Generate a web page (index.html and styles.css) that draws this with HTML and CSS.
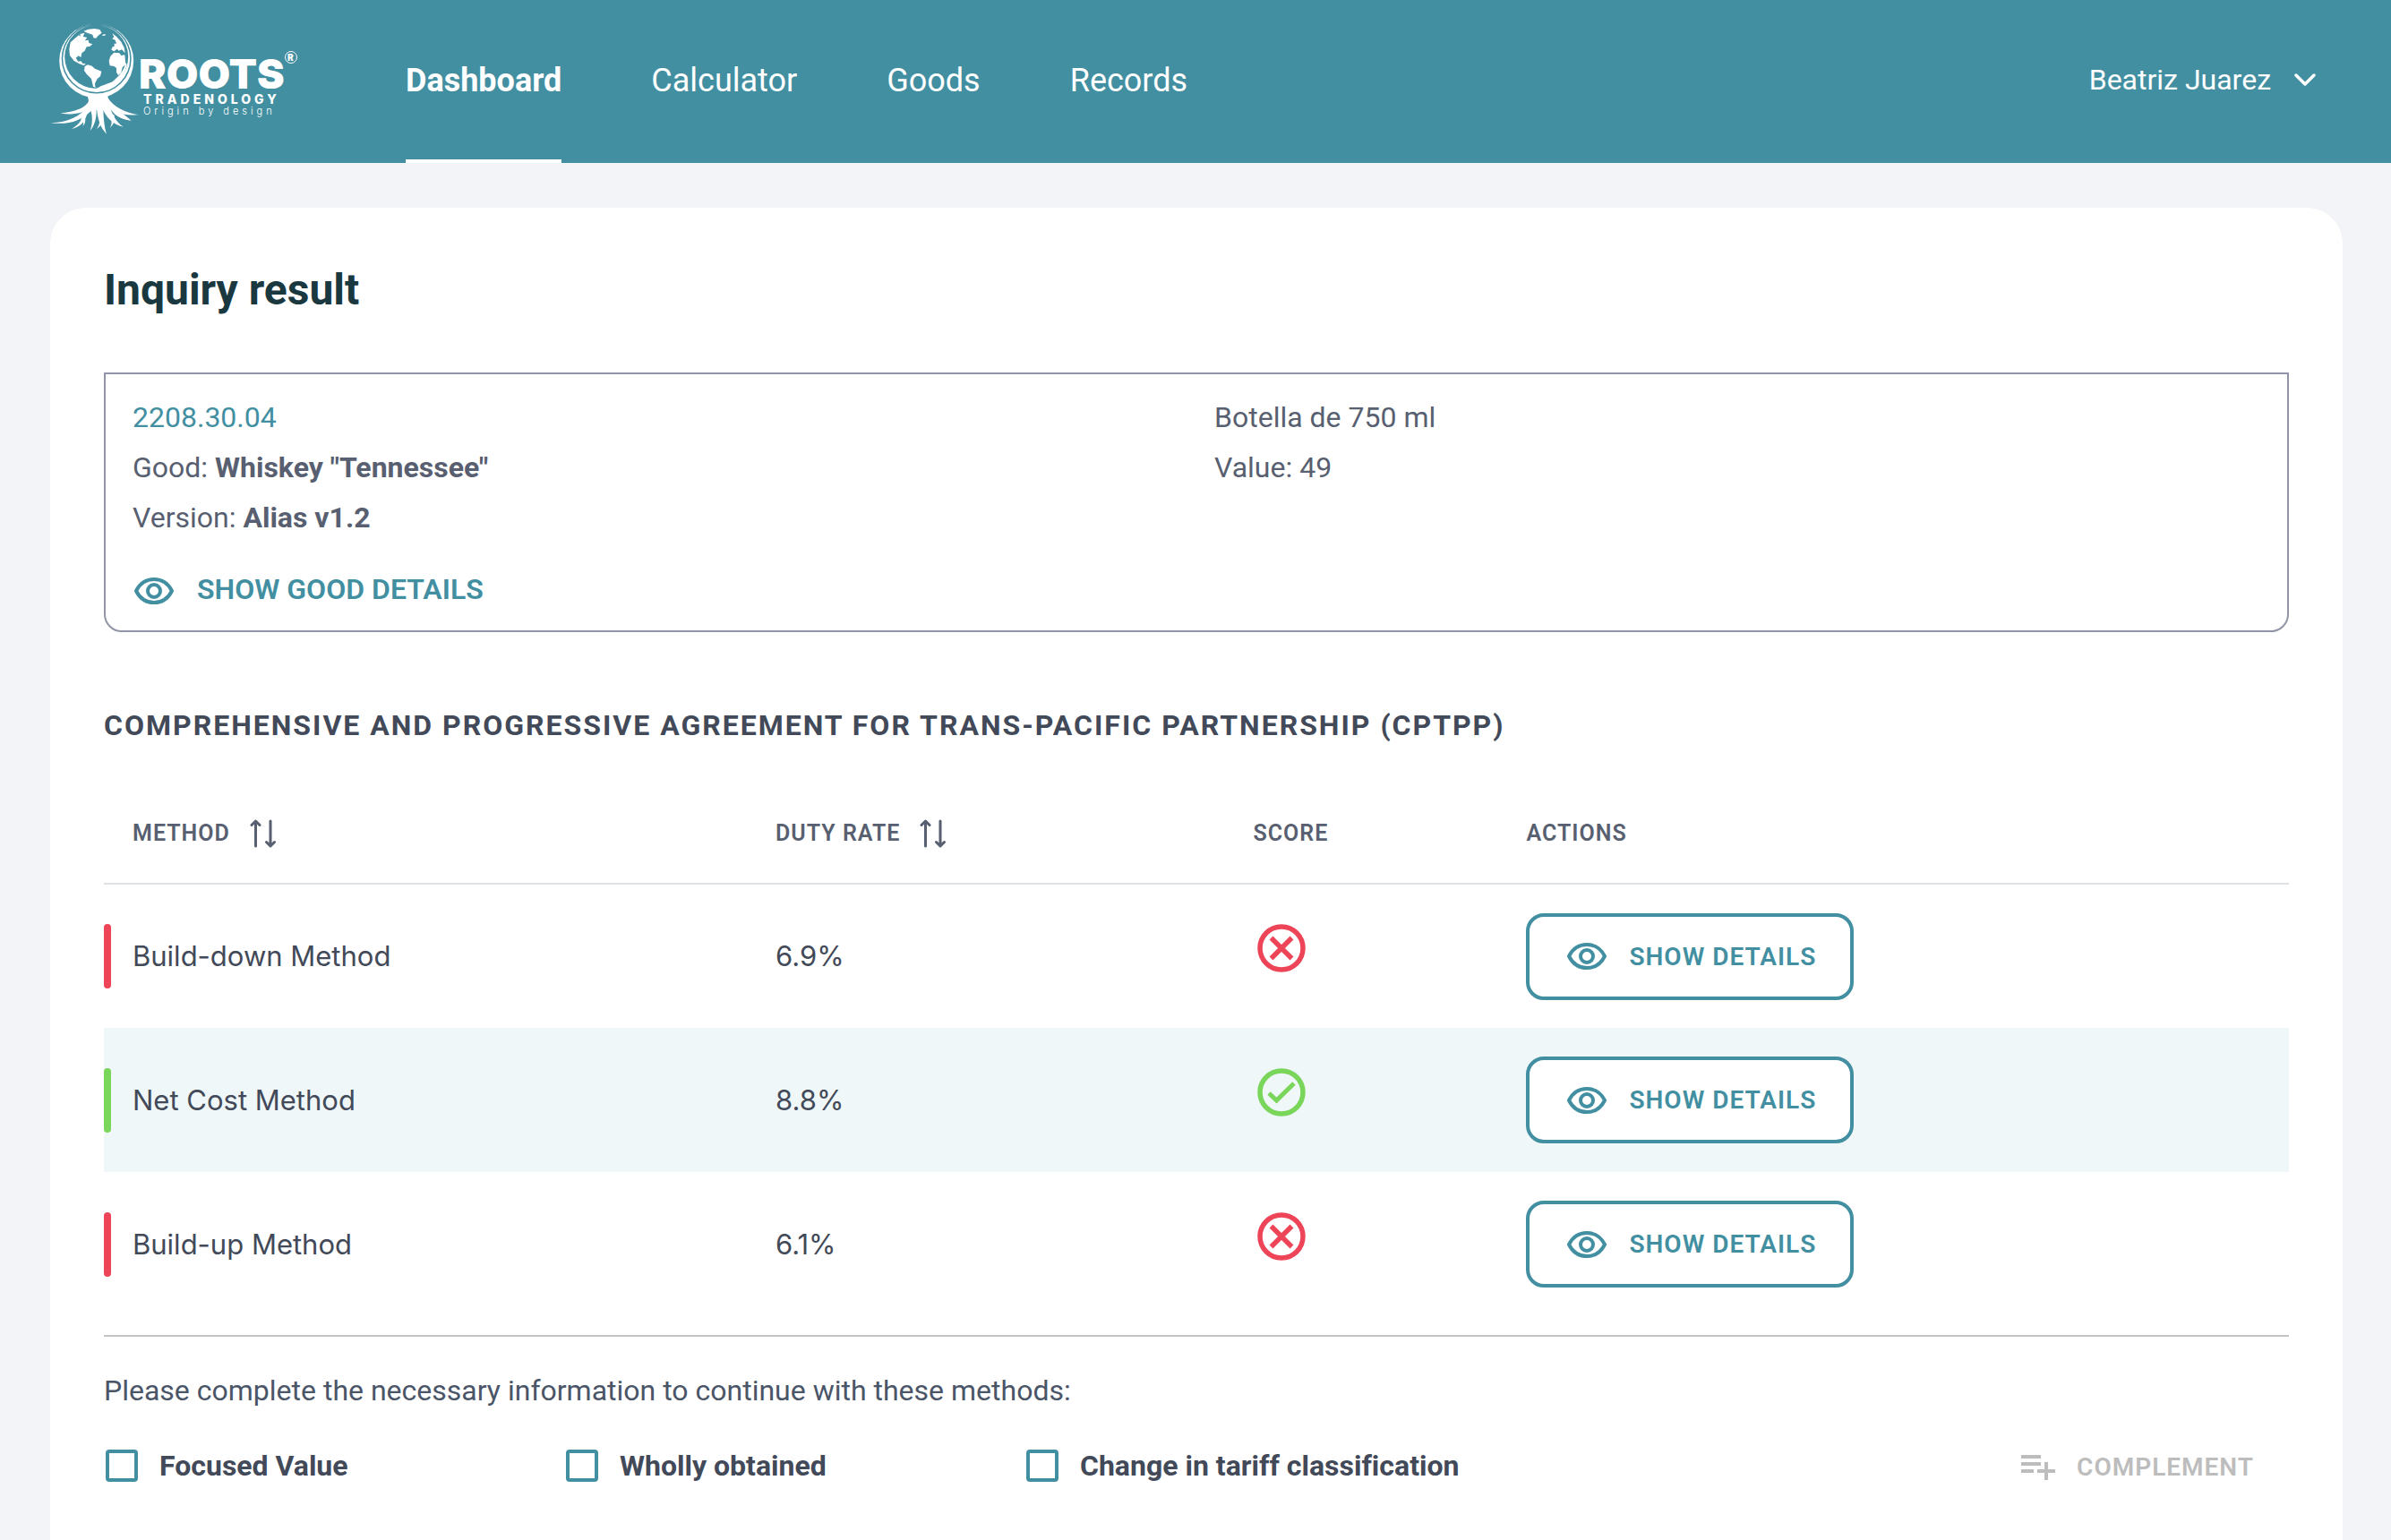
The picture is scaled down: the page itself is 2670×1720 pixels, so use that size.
FILE: index.html
```html
<!DOCTYPE html>
<html lang="en">
<head>
<meta charset="utf-8">
<meta name="viewport" content="width=device-width, initial-scale=1">
<title>Inquiry result</title>
<link rel="stylesheet" href="styles.css">
</head>
<body>
<svg class="sprite" aria-hidden="true">
  <symbol id="eye" viewBox="0 0 44 30">
    <path d="M2 15C6 7 13 2 22 2s16 5 20 13c-4 8-11 13-20 13S6 23 2 15Z" fill="none" stroke="currentColor" stroke-width="4" stroke-linejoin="round"/>
    <circle cx="22" cy="15" r="7" fill="none" stroke="currentColor" stroke-width="4"/>
  </symbol>
  <symbol id="sort" viewBox="0 0 30 32">
    <path d="M6.500 30V2M2 6.500l4.500-4.500 4.500 4.500M23 2v28M18.500 25.500l4.500 4.500 4.500-4.500" fill="none" stroke="currentColor" stroke-width="3" stroke-linecap="round" stroke-linejoin="round"/>
  </symbol>
  <symbol id="cross" viewBox="0 0 54 54">
    <circle cx="27" cy="27" r="24" fill="none" stroke="currentColor" stroke-width="5.500"/>
    <path d="M15.500 15.500l23 23M38.500 15.500l-23 23" fill="none" stroke="currentColor" stroke-width="5.500"/>
  </symbol>
  <symbol id="check" viewBox="0 0 54 54">
    <circle cx="27" cy="27" r="24" fill="none" stroke="currentColor" stroke-width="5.500"/>
    <path d="M13 28l8.500 8L41 17" fill="none" stroke="currentColor" stroke-width="5"/>
  </symbol>
</svg>

<header class="topbar">
  <a class="logo" href="#" aria-label="Roots Tradenology">
    <svg viewBox="0 0 290 130" width="290" height="130">
      <g fill="#fff" fill-rule="evenodd">
        <path d="M51.700 .5a41.500 41.500 0 0 1 0 83a41.500 41.500 0 0 1 0-83zM51.700 .5a39 39 0 0 0 0 78a39 39 0 0 0 0-78z"/>
        <path d="M51.700 2a37.500 37.500 0 0 1 0 75a37.500 37.500 0 0 1 0-75zM51.700 2a35.500 35.500 0 0 0 0 71a35.500 35.500 0 0 0 0-71z"/>
      </g>
      <g fill="#fff" transform="translate(-16 -16) scale(.33333)">
        <path d="M112 135L116 112 134 96 144 88 150 92 148 84 164 80 158 92 172 96 164 106 176 104 178 114 190 118 180 126 170 127 164 140 154 148 151 162 143 157 134 164 142 176 152 175 156 182 168 184 160 189 146 184 128 174 114 156Z"/>
        <path d="M160 74L176 68 196 66 214 69 221 80 208 90 202 98 193 97 190 86 172 80ZM222 87l10-3 2 4-9 3Z"/>
        <path d="M164 192L174 187 188 191 198 200 220 209 216 226 206 234 198 250 199 262 208 268 192 260 186 234 170 218 162 206Z"/>
        <path d="M200 270C215 256 235 254 258 243C285 220 300 196 300 180L305 186C298 226 266 256 235 265L215 274Z"/>
        <path d="M256 82L270 92 286 110 296 130 299 148 288 136 278 140 272 134 262 142 253 137 256 128 264 124 262 116 270 116 266 104 256 100 262 94Z"/>
        <path d="M250 158L262 146 280 148 286 156 298 154 301 186 290 196 286 214 276 222 270 212 270 198 262 192 248 190 245 174Z"/>
        <path d="M172 288H242C240 310 246 325 255 338L228 336 212 338 190 338 170 345C178 325 180 310 172 288Z"/>
        <path d="M178 305C172 330 130 345 82 349C125 358 160 350 190 325Z"/>
        <path d="M174 325C150 360 110 380 50 382C110 388 150 378 192 335Z"/>
        <path d="M160 350C155 375 140 390 120 402C150 396 168 375 174 342Z"/>
        <path d="M150 370C160 376 161 384 157 393C169 382 167 366 162 358Z"/>
        <path d="M180 330C192 355 190 385 182 408C198 390 206 360 202 325Z"/>
        <path d="M204 330C206 370 218 400 237 419C229 395 226 360 226 325Z"/>
        <path d="M212 360C216 380 212 392 203 402C220 394 222 380 222 370Z"/>
        <path d="M222 330C233 360 257 388 294 395C270 380 252 350 248 320Z"/>
        <path d="M248 350C256 370 255 385 249 398C264 384 266 368 262 355Z"/>
        <path d="M234 310C246 345 280 358 345 355C300 347 262 330 240 296Z"/>
        <path d="M250 335C268 362 292 370 320 374C302 360 285 343 262 330Z"/>
      </g>
      <circle cx="269" cy="38" r="6.500" fill="none" stroke="#fff"/>
      <g class="logo-text">
        <text class="logo-name" x="99" y="73">ROOTS</text>
        <text class="logo-sub" x="104" y="90">TRADENOLOGY</text>
        <text class="logo-tag" x="104" y="102">Origin by design</text>
        <text class="logo-reg" x="265" y="42">R</text>
      </g>
    </svg>
  </a>
  <nav class="nav">
    <a class="nav-link active" href="#">Dashboard</a>
    <a class="nav-link" href="#">Calculator</a>
    <a class="nav-link" href="#">Goods</a>
    <a class="nav-link" href="#">Records</a>
  </nav>
  <button class="user" type="button">Beatriz Juarez
    <svg viewBox="0 0 24 14" width="24" height="14"><path d="M2 2l10 10L22 2" fill="none" stroke="currentColor" stroke-width="3.500" stroke-linecap="round" stroke-linejoin="round"/></svg>
  </button>
</header>

<main class="card">
  <h1>Inquiry result</h1>

  <section class="info">
    <div>
      <p class="code">2208.30.04</p>
      <p>Good: <strong>Whiskey "Tennessee"</strong></p>
      <p>Version: <strong>Alias v1.2</strong></p>
      <button class="text-button" type="button"><svg class="eye"><use href="#eye"/></svg>SHOW GOOD DETAILS</button>
    </div>
    <div>
      <p>Botella de 750 ml</p>
      <p>Value: 49</p>
    </div>
  </section>

  <h2>COMPREHENSIVE AND PROGRESSIVE AGREEMENT FOR TRANS-PACIFIC PARTNERSHIP (CPTPP)</h2>

  <table class="methods">
    <colgroup><col class="col-method"><col class="col-rate"><col class="col-score"><col></colgroup>
    <thead>
      <tr>
        <th scope="col"><button class="sort" type="button">METHOD<svg><use href="#sort"/></svg></button></th>
        <th scope="col"><button class="sort" type="button">DUTY RATE<svg><use href="#sort"/></svg></button></th>
        <th scope="col">SCORE</th>
        <th scope="col">ACTIONS</th>
      </tr>
    </thead>
    <tbody>
      <tr class="bad">
        <td><div class="method">Build-down Method</div></td>
        <td>6.9%</td>
        <td><svg class="score" role="img" aria-label="Does not qualify"><use href="#cross"/></svg></td>
        <td><button class="outline-button" type="button"><svg class="eye"><use href="#eye"/></svg>SHOW DETAILS</button></td>
      </tr>
      <tr class="good">
        <td><div class="method">Net Cost Method</div></td>
        <td>8.8%</td>
        <td><svg class="score" role="img" aria-label="Qualifies"><use href="#check"/></svg></td>
        <td><button class="outline-button" type="button"><svg class="eye"><use href="#eye"/></svg>SHOW DETAILS</button></td>
      </tr>
      <tr class="bad">
        <td><div class="method">Build-up Method</div></td>
        <td>6.1%</td>
        <td><svg class="score" role="img" aria-label="Does not qualify"><use href="#cross"/></svg></td>
        <td><button class="outline-button" type="button"><svg class="eye"><use href="#eye"/></svg>SHOW DETAILS</button></td>
      </tr>
    </tbody>
  </table>

  <section class="complement">
    <p>Please complete the necessary information to continue with these methods:</p>
    <div class="options">
      <label><input type="checkbox">Focused Value</label>
      <label><input type="checkbox">Wholly obtained</label>
      <label class="wide"><input type="checkbox">Change in tariff classification</label>
      <button class="complement-button" type="button" disabled>
        <svg viewBox="0 0 38 28" width="38" height="28"><path d="M0 0h22v4H0zM0 8h22v4H0zM0 16h14v4H0zM18 16h8V8h4v8h8v4h-8v8h-4v-8h-8z" fill="currentColor"/></svg>COMPLEMENT
      </button>
    </div>
  </section>
</main>
</body>
</html>
```
FILE: styles.css
```css
:root {
  --teal: #428fa2;
  --red: #ed4557;
  --green: #79d65a;
  --ink: #424958;
  --muted: #585f70;
}

* { box-sizing: border-box; }

body {
  margin: 0;
  background: #f3f4f7;
  color: var(--muted);
  font: 32px/56px Roboto, "Liberation Sans", sans-serif;
}

h1, h2, p { margin: 0; }

button {
  margin: 0;
  padding: 0;
  border: 0;
  background: none;
  color: inherit;
  font: inherit;
  cursor: pointer;
}

svg { display: block; flex: none; }

.sprite { position: absolute; width: 0; height: 0; }

/* Top bar */
.topbar {
  display: flex;
  height: 182px;
  padding: 0 84px 0 56px;
  background: var(--teal);
  color: #fff;
}

.logo { width: 397px; padding-top: 26px; }

.logo-text { fill: #fff; }
.logo-name { font: 900 46px Inter, sans-serif; }
.logo-sub { font: 800 14px Inter, sans-serif; letter-spacing: 4px; }
.logo-tag { font: 300 11px Inter, sans-serif; letter-spacing: 4px; }
.logo-reg { font: 900 10px Inter, sans-serif; }

.nav { display: flex; gap: 100px; }

.nav-link {
  padding-top: 62px;
  border-bottom: 4px solid transparent;
  color: #fff;
  font-size: 36px;
  text-decoration: none;
}

.nav-link.active { border-color: #fff; font-weight: 700; }

.user {
  display: flex;
  align-items: center;
  align-self: flex-start;
  gap: 26px;
  margin-left: auto;
  padding-top: 61px;
}

/* Card */
.card {
  margin: 50px 54px 0 56px;
  padding: 60px 60px 80px;
  border-radius: 40px 40px 0 0;
  background: #fff;
}

h1 { color: #1a383f; font-size: 48px; line-height: 64px; }

.info {
  display: grid;
  grid-template-columns: 1fr 1fr;
  column-gap: 40px;
  margin-top: 60px;
  padding: 20px 30px 18px;
  border: 2px solid #9295a7;
  border-radius: 0 0 20px 20px;
}

.code { color: var(--teal); }

.text-button {
  display: flex;
  align-items: center;
  gap: 26px;
  margin-top: 24px;
  padding-left: 2px;
  color: var(--teal);
  font-weight: 600;
}

.eye { width: 44px; height: 30px; }
.text-button .eye { margin-top: 4px; }

h2 {
  margin-top: 76px;
  color: var(--ink);
  font-size: 32px;
  font-weight: 700;
  letter-spacing: 2px;
}

/* Methods table */
.methods {
  width: 100%;
  margin-top: 37px;
  border-collapse: collapse;
  table-layout: fixed;
}

.col-method { width: 30.74%; }
.col-rate { width: 21.86%; }
.col-score { width: 12.5%; }

th, td { padding: 0; text-align: left; }
th:first-child { padding-left: 32px; }

th {
  height: 112px;
  border-bottom: 2px solid #dee2e6;
  font-size: 25px;
  font-weight: 600;
  letter-spacing: 1px;
}

.sort { display: flex; align-items: center; gap: 22px; letter-spacing: 1px; }
.sort svg { width: 30px; height: 32px; }

td { height: 161px; color: var(--ink); font-family: Inter, sans-serif; font-size: 31px; }

.good { background: #eff7f9; }

.method { display: flex; align-items: center; gap: 24px; }
.method::before {
  content: "";
  width: 8px;
  height: 72px;
  border-radius: 4px;
  background: currentColor;
}
.bad .method::before { background: var(--red); }
.good .method::before { background: var(--green); }

.score { width: 54px; height: 54px; margin: 0 0 18px 5px; }
.bad .score { color: var(--red); }
.good .score { color: var(--green); }

.outline-button {
  display: flex;
  align-items: center;
  gap: 25px;
  height: 97px;
  padding: 0 38px 0 42px;
  border: 4px solid var(--teal);
  border-radius: 20px;
  background: #fff;
  color: var(--teal);
  font: 600 28px Roboto, sans-serif;
  letter-spacing: 1px;
}

/* Further methods */
.complement {
  margin-top: 21px;
  padding-top: 32px;
  border-top: 2px solid #c4c4c4;
  color: #4a5568;
}

.options { display: flex; align-items: center; margin-top: 28px; }

label {
  display: flex;
  align-items: center;
  gap: 24px;
  width: 514px;
  padding-left: 2px;
  color: var(--ink);
  font-weight: 700;
  font-variant-ligatures: none;
}

.wide { width: auto; }

input {
  appearance: none;
  width: 36px;
  height: 36px;
  margin: 0;
  border: 4px solid var(--teal);
  border-radius: 4px;
}

.complement-button {
  display: flex;
  align-items: center;
  gap: 24px;
  margin: 0 39px 0 auto;
  padding-top: 4px;
  color: #bdbdbd;
  font-size: 28px;
  font-weight: 600;
  line-height: 52px;
  letter-spacing: 1px;
}
```
